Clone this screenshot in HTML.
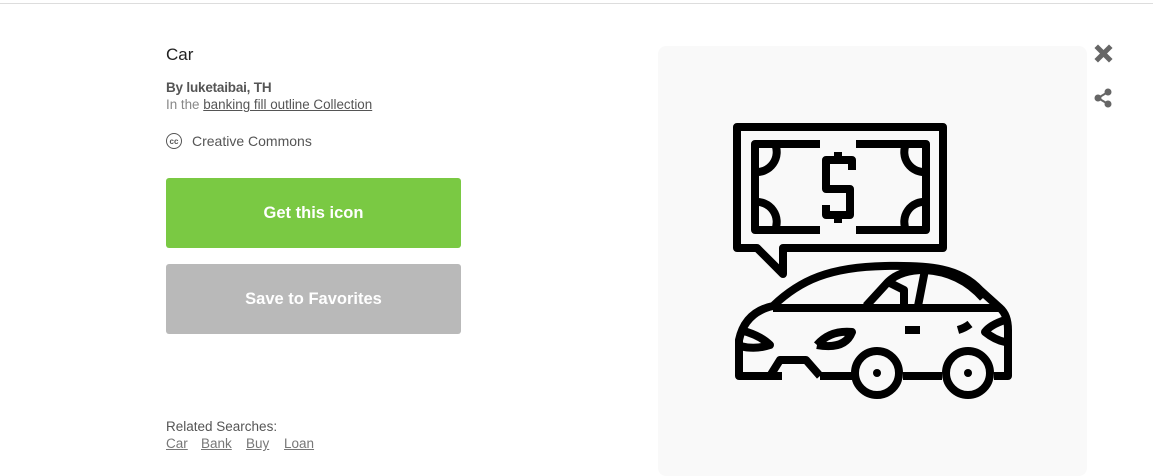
<!DOCTYPE html>
<html><head><style>
body{margin:0;width:1153px;height:468px;background:#fff;font-family:"Liberation Sans",sans-serif;position:relative;overflow:hidden}
.top{position:absolute;left:0;right:0;top:3px;height:1px;background:#ddd}
.a{position:absolute;white-space:nowrap}
h1{position:absolute;left:166px;top:45px;margin:0;font-size:17px;font-weight:normal;color:#222}
.by{left:166px;top:80px;font-size:13.5px;color:#555;font-weight:bold;letter-spacing:-0.2px}
.in{left:166px;top:97px;font-size:13.4px;color:#888}
.in u{color:#555}
.cc{left:166px;top:133px;font-size:14px;color:#555;display:flex;align-items:center}
.cc span.c{width:16px;height:16px;border:1.5px solid #555;border-radius:50%;font-size:8px;font-weight:bold;display:inline-flex;align-items:center;justify-content:center;margin-right:10px;box-sizing:border-box}
.btn{left:166px;width:295px;border-radius:3px;color:#fff;font-weight:bold;font-size:16.5px;display:flex;align-items:center;justify-content:center}
.rel{left:166px;top:419px;font-size:13.5px;color:#555}
.links{left:166px;top:436px;font-size:13.5px;color:#777}
.links u{position:absolute}
.panel{left:658px;top:46px;width:429px;height:430px;background:#f9f9f9;border-radius:8px}
</style></head><body>
<div class="top"></div>
<h1>Car</h1>
<div class="a by">By luketaibai, TH</div>
<div class="a in">In the <u>banking fill outline Collection</u></div>
<div class="a cc"><span class="c">cc</span>Creative Commons</div>
<div class="a btn" style="top:178px;height:70px;background:#7ac943">Get this icon</div>
<div class="a btn" style="top:264px;height:70px;background:#b9b9b9">Save to Favorites</div>
<div class="a rel">Related Searches:</div>
<div class="a links"><u style="left:0">Car</u><u style="left:35px">Bank</u><u style="left:80px">Buy</u><u style="left:118px">Loan</u></div>
<div class="a panel"></div>
<svg class="a" style="left:0;top:0" width="1153" height="468">
<g fill="none" stroke="#000" stroke-width="8" stroke-linejoin="round">
<path d="M783 248 H943 V127 H737 V248 H757 L783 274 Z"/>
<path d="M820 144 H755 V230 H820 M856 144 H926 V230 H856"/>
<path d="M755 172 a20 20 0 0 0 20 -28 M926 172 a20 20 0 0 1 -20 -28 M755 202 a20 20 0 0 1 20 28 M926 202 a20 20 0 0 0 -20 28"/>
<path d="M852 170 V160 H826 V189 H850 V215 H826 V205 M838 152 V160 M838 215 V223"/>
<path d="M994 376 H1008 V330 Q1008 315 1000 308 L980 290 C960 268 930 265 885 266 C830 267 800 280 773 306 Q745 312 739 340 V376 H782 M820 376 H852 M903 376 H942"/>
<path d="M773 308 H1000"/>
<path d="M866 306 L888 282 L904 290 L904 306 M888 282 Q900 270 925 270 L918 306 M925 270 Q960 272 983 298"/>
<path d="M740 330 Q760 335 770 345 Q755 350 740 346 M817 345 Q830 330 852 332 Q845 350 817 345 M1005 320 Q990 325 985 332 Q995 340 1005 342"/>
<path d="M905 330 H920 M958 330 Q965 328 970 324"/>
<path d="M770 376 L780 360 H806 L820 376"/>
<circle cx="877" cy="373" r="22"/>
<circle cx="968" cy="373" r="22"/>
</g>
<circle cx="877" cy="373" r="4"/><circle cx="968" cy="373" r="4"/>
<g stroke="#666" stroke-width="5" stroke-linecap="square"><path d="M1098 48 L1109 59 M1109 48 L1098 59"/></g>
<g fill="#666" stroke="#666" stroke-width="2"><path d="M1108 92 L1098 98 L1108 104" fill="none"/><circle cx="1108" cy="92" r="2.5"/><circle cx="1098" cy="98" r="2.5"/><circle cx="1108" cy="104" r="2.5"/></g>
</svg>
</body></html>
